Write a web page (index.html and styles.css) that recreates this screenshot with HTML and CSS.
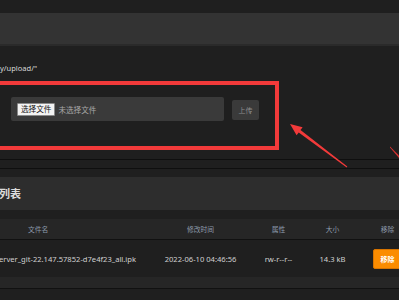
FILE: index.html
```
<!DOCTYPE html>
<html lang="zh">

<head>
    <meta charset="UTF-8">
    <meta name="viewport" content="width=device-width, initial-scale=1.0">
    <title>上传文件</title>
    <link rel="stylesheet" href="styles.css">
</head>

<body>
    <div class="page">
        <div class="topbar"></div>

        <p class="path-note">y/upload/"</p>

        <div class="upload-row">
            <div class="file-box">
                <span class="file-btn">选择文件</span>
                <span class="file-none">未选择文件</span>
            </div>
            <button class="upload-btn">上传</button>
        </div>

        <div class="rule rule-first"></div>
        <div class="rule"></div>

        <h2 class="section-title">列表</h2>

        <div class="file-table">
            <div class="table-head">
                <span class="col-name">文件名</span>
                <span class="col-time">修改时间</span>
                <span class="col-attr">属性</span>
                <span class="col-size">大小</span>
                <span class="col-act">移除</span>
            </div>
            <div class="table-row">
                <span class="col-name name-cell">erver_git-22.147.57852-d7e4f23_all.ipk</span>
                <span class="col-time">2022-06-10 04:46:56</span>
                <span class="col-attr">rw-r--r--</span>
                <span class="col-size">14.3 kB</span>
                <span class="col-act"><button class="remove-btn">移除</button></span>
            </div>
            <div class="table-row row-empty"></div>
        </div>

        <!-- 标注：红框和箭头 -->
        <div class="mark-box"></div>
        <svg class="mark-arrow" width="399" height="300" viewBox="0 0 399 300">
            <polygon points="290,124 302.6,127.2 300.5,130 347.3,166.6 346.7,167.4 298.7,132.4 296.6,135.2" fill="#f23a3a" />
            <polygon points="390,146.5 399,155.5 399,158 390,147.5" fill="#d83232" />
        </svg>
    </div>
</body>

</html>
```

FILE: styles.css
```
body {
    margin: 0;
    background-color: #1f1f1f;
    font-family: 'Noto Sans', 'Noto Sans CJK SC', sans-serif;
    color: #cfcfcf;
    overflow: hidden;
}

.page {
    position: relative;
    width: 399px;
    height: 300px;
    overflow: hidden;
}

.topbar {
    height: 31px;
    margin-top: 13px;
    background-color: #333333;
    border-bottom: 2px solid #2a2a2a;
}

.path-note {
    margin: 16px 0 0 0;
    font-size: 7.5px;
    line-height: 12px;
    color: #d8d8d8;
}

.upload-row {
    display: flex;
    align-items: flex-start;
    gap: 8px;
    margin-top: 23px;
    padding-left: 11px;
}

.file-box {
    display: flex;
    align-items: center;
    gap: 3px;
    width: 213px;
    height: 24px;
    padding-left: 6px;
    box-sizing: border-box;
    background-color: #3a3a3a;
    border-radius: 2px;
}

.file-btn {
    padding: 0 3px;
    font-size: 7.6px;
    line-height: 11px;
    color: #111;
    background-color: #f3f3f3;
    border: 1px solid #8a8a8a;
    border-radius: 1px;
}

.file-none {
    font-size: 7.6px;
    color: #a8a8a8;
}

.upload-btn {
    width: 27px;
    height: 20px;
    margin-top: 3px;
    padding: 0;
    font-family: 'Noto Sans', 'Noto Sans CJK SC', sans-serif;
    font-size: 7px;
    color: #8e8e8e;
    background-color: #3a3a3a;
    border: none;
    border-radius: 2px;
}

.rule {
    height: 1px;
    margin-top: 8px;
    background-color: #0f0f0f;
}

.rule-first {
    margin-top: 38px;
}

.section-title {
    height: 33px;
    margin: 8px 0 0 0;
    padding-left: 0;
    font-size: 11px;
    line-height: 33px;
    font-weight: bold;
    text-indent: -1px;
    color: #dcdcdc;
    background-color: #2d2d2d;
}

.file-table {
    margin-top: 9px;
}

.table-head,
.table-row {
    display: grid;
    grid-template-columns: 155px 91px 65px 43px 67px;
    align-items: center;
}

.table-head {
    height: 20px;
    background-color: #262626;
    border-bottom: 1px solid #111;
    font-size: 6.8px;
    color: #8d9aab;
}

.table-head span,
.table-row span {
    text-align: center;
    white-space: nowrap;
}

.table-head .col-name {
    text-align: left;
    padding-left: 28px;
}

.table-row {
    height: 37px;
    background-color: #1f1f1f;
    font-size: 7.6px;
    color: #d0d0d0;
}

.table-row .name-cell {
    text-align: left;
    margin-left: -1px;
}

.row-empty {
    height: 11px;
    background-color: #262626;
    border-bottom: 1px solid #111;
}

.remove-btn {
    width: 29px;
    height: 20px;
    padding: 0;
    font-family: 'Noto Sans', 'Noto Sans CJK SC', sans-serif;
    font-size: 7px;
    font-weight: bold;
    color: #fff;
    background-color: #fb8c00;
    border: 1px solid #d77400;
    border-radius: 2px;
}

.mark-box {
    position: absolute;
    left: -10px;
    top: 81px;
    width: 289px;
    height: 69px;
    box-sizing: border-box;
    border: 4px solid #f23a3a;
}

.mark-arrow {
    position: absolute;
    left: 0;
    top: 0;
    pointer-events: none;
}
```
